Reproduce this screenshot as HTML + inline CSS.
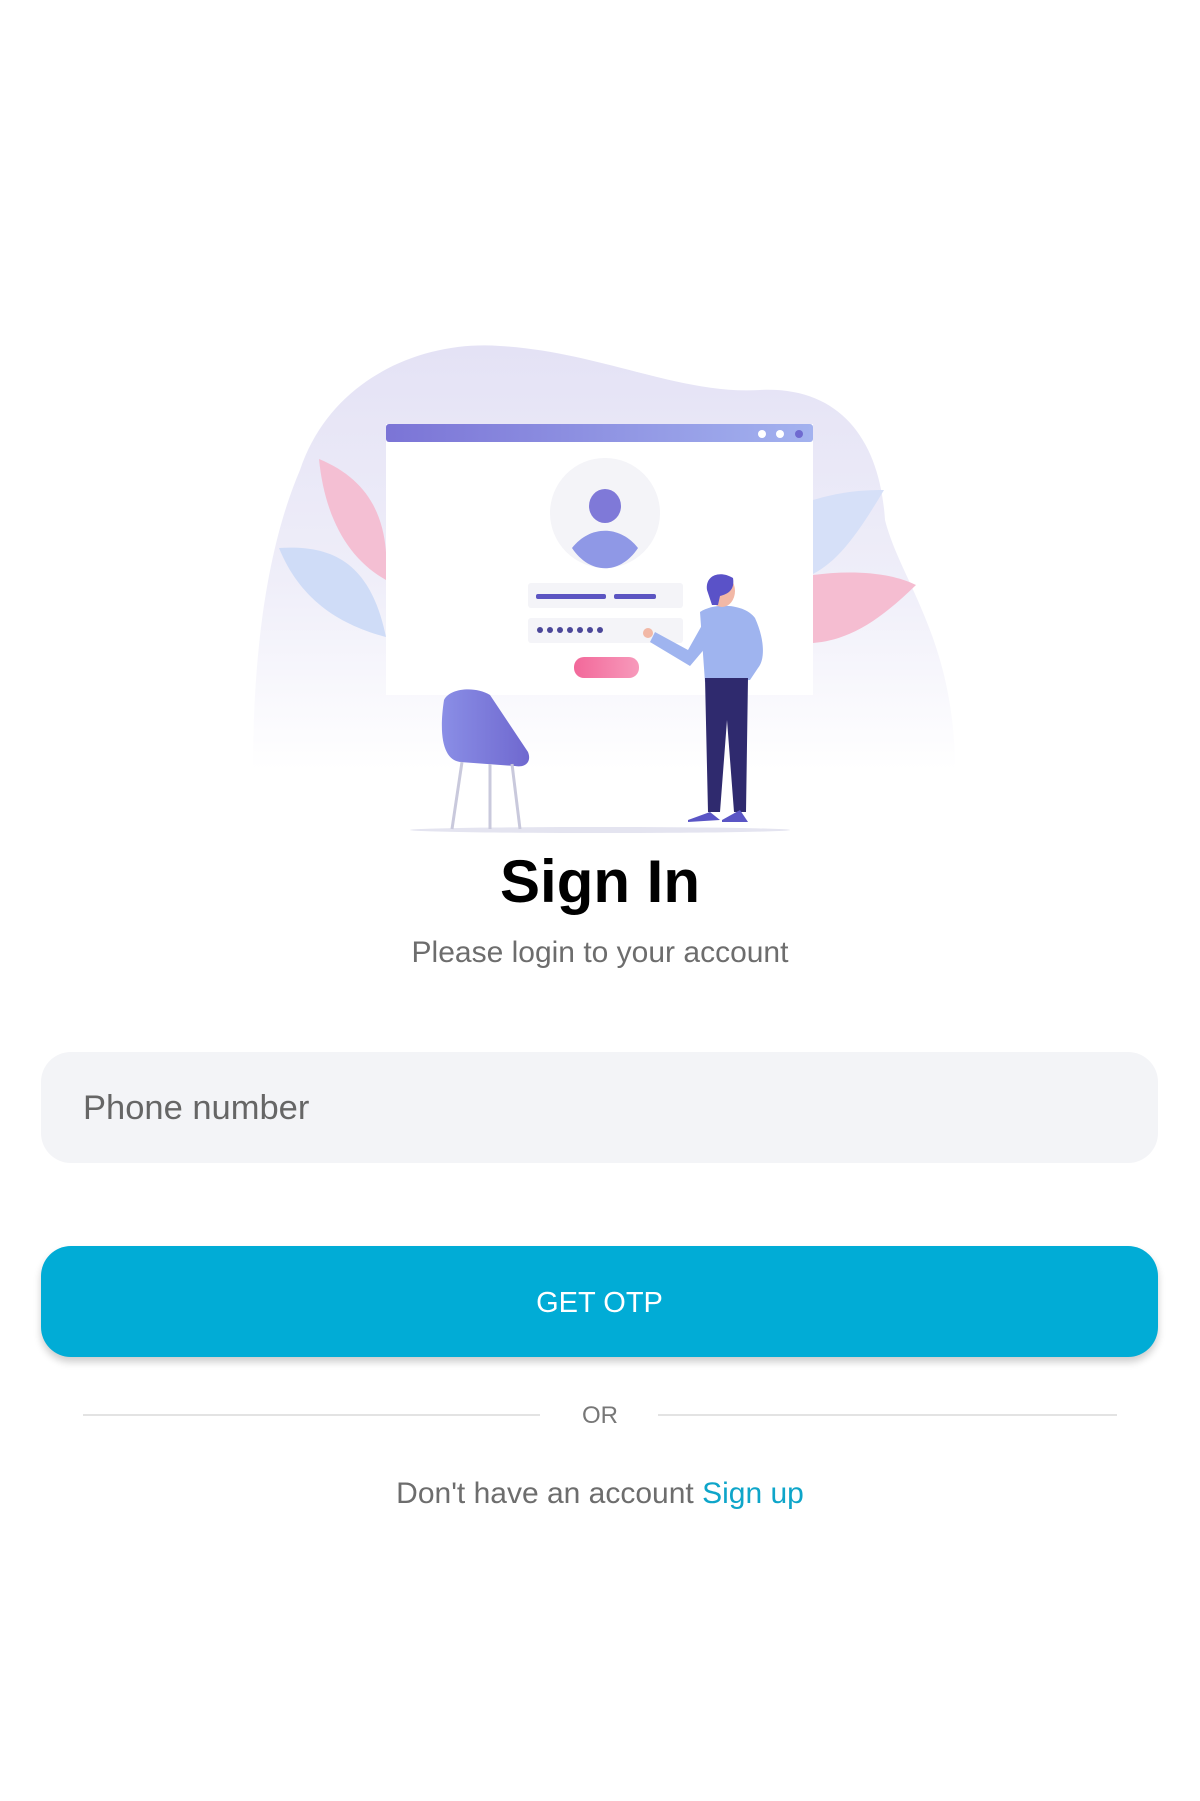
<!DOCTYPE html>
<html><head><meta charset="utf-8"><style>
html,body{margin:0;padding:0;background:#fff;width:1200px;height:1801px;overflow:hidden;font-family:"Liberation Sans",sans-serif;position:relative}
.abs{position:absolute}
</style></head><body>
<svg class="abs" style="left:0;top:0" width="1200" height="900" viewBox="0 0 1200 900">
<defs>
<linearGradient id="blob" x1="0" y1="0" x2="0" y2="1"><stop offset="0" stop-color="#e4e2f5"/><stop offset="0.55" stop-color="#efeef9"/><stop offset="1" stop-color="#fff"/></linearGradient>
<linearGradient id="bar" x1="0" x2="1"><stop offset="0" stop-color="#7b74d6"/><stop offset="1" stop-color="#a3b2ef"/></linearGradient>
<linearGradient id="chair" x1="0" x2="1"><stop offset="0" stop-color="#8a8ee6"/><stop offset="1" stop-color="#6f68cf"/></linearGradient>
<linearGradient id="pink" x1="0" x2="1"><stop offset="0" stop-color="#f2689a"/><stop offset="1" stop-color="#f79abb"/></linearGradient>
</defs>
<path d="M300 470 C330 380 420 340 500 346 C600 352 680 395 760 390 C840 386 880 440 885 520 C900 580 955 640 955 770 L253 770 C253 640 270 540 300 470Z" fill="url(#blob)"/>
<path d="M319 459 C370 480 390 520 386 580 C350 560 325 520 319 459Z" fill="#f4bfd3"/>
<path d="M279 548 C330 545 370 560 386 637 C340 625 300 600 279 548Z" fill="#cfdcf7"/>
<path d="M884 490 C860 530 840 560 813 574 L813 500 C840 492 860 490 884 490Z" fill="#d6e0f8"/>
<path d="M916 585 C880 620 850 640 813 643 L813 575 C850 570 890 572 916 585Z" fill="#f5bdd1"/>
<rect x="386" y="424" width="427" height="271" fill="#fff"/>
<rect x="386" y="424" width="427" height="18" rx="3" fill="url(#bar)"/>
<circle cx="762" cy="434" r="4" fill="#fff"/><circle cx="780" cy="434" r="4" fill="#fff"/><circle cx="799" cy="434" r="4" fill="#6f6ad0"/>
<circle cx="605" cy="513" r="55" fill="#f4f4f8"/>
<ellipse cx="605" cy="506" rx="16" ry="17" fill="#7f79d8"/>
<path d="M572 548 C590 525 620 525 638 548 C620 575 590 575 572 548Z" fill="#8f98e6"/>
<rect x="528" y="583" width="155" height="25" rx="3" fill="#f4f4f8"/>
<rect x="536" y="594" width="70" height="5" rx="2" fill="#5c55c2"/><rect x="614" y="594" width="42" height="5" rx="2" fill="#5c55c2"/>
<rect x="528" y="618" width="155" height="25" rx="3" fill="#f4f4f8"/>
<g fill="#4b4799"><circle cx="540" cy="630" r="3"/><circle cx="550" cy="630" r="3"/><circle cx="560" cy="630" r="3"/><circle cx="570" cy="630" r="3"/><circle cx="580" cy="630" r="3"/><circle cx="590" cy="630" r="3"/><circle cx="600" cy="630" r="3"/></g>
<rect x="574" y="657" width="65" height="21" rx="10" fill="url(#pink)"/>
<ellipse cx="600" cy="830" rx="190" ry="3" fill="#e4e4f0"/>
<path d="M444 700 C450 688 475 686 490 695 L528 752 C532 762 525 768 515 766 L460 762 C445 760 438 740 444 700Z" fill="url(#chair)"/>
<g stroke="#c9c9dc" stroke-width="3"><line x1="462" y1="762" x2="452" y2="829"/><line x1="490" y1="764" x2="490" y2="829"/><line x1="512" y1="764" x2="520" y2="829"/></g>
<path d="M706 618 L688 650 L655 632 L650 642 L690 666 L712 640Z" fill="#9fb4ef"/>
<circle cx="648" cy="633" r="5" fill="#f2b8a6"/>
<path d="M700 612 C715 602 745 604 755 618 C765 640 765 660 758 668 L750 680 L705 682 Z" fill="#9fb4ef"/>
<path d="M705 678 L748 678 L746 812 L734 812 L727 720 L720 812 L708 812Z" fill="#2f2a6e"/>
<path d="M688 820 L710 812 L720 820 L688 822Z" fill="#5a55c5"/><path d="M722 820 L740 810 L748 822 L722 822Z" fill="#5a55c5"/>
<ellipse cx="722" cy="591" rx="13" ry="16" fill="#f2b8a6"/>
<path d="M707 590 C705 575 720 570 733 578 C735 590 728 594 720 596 L718 605 L712 605Z" fill="#5a52c8"/>
</svg>
<div class="abs" style="left:0;width:1200px;top:847px;text-align:center;font-size:60px;font-weight:bold;color:#000">Sign In</div>
<div class="abs" style="left:0;width:1200px;top:936px;text-align:center;font-size:30px;color:#6d6d6d">Please login to your account</div>
<div class="abs" style="left:41px;top:1052px;width:1117px;height:111px;border-radius:30px;background:#f3f4f7"></div>
<div class="abs" style="left:83px;top:1089px;font-size:34.5px;color:#666">Phone number</div>
<div class="abs" style="left:41px;top:1246px;width:1117px;height:111px;border-radius:30px;background:#01acd6;box-shadow:0 5px 8px rgba(0,0,0,0.2);color:#fff;font-size:29px;text-align:center;line-height:114px">GET OTP</div>
<div class="abs" style="left:83px;top:1414px;width:457px;height:2px;background:#e3e3e3"></div>
<div class="abs" style="left:658px;top:1414px;width:459px;height:2px;background:#e3e3e3"></div>
<div class="abs" style="left:0;width:1200px;top:1402px;text-align:center;font-size:24px;color:#777">OR</div>
<div class="abs" style="left:0;width:1200px;top:1477px;text-align:center;font-size:30px;color:#6d6d6d">Don't have an account <span style="color:#0ea5c9">Sign up</span></div>
</body></html>
